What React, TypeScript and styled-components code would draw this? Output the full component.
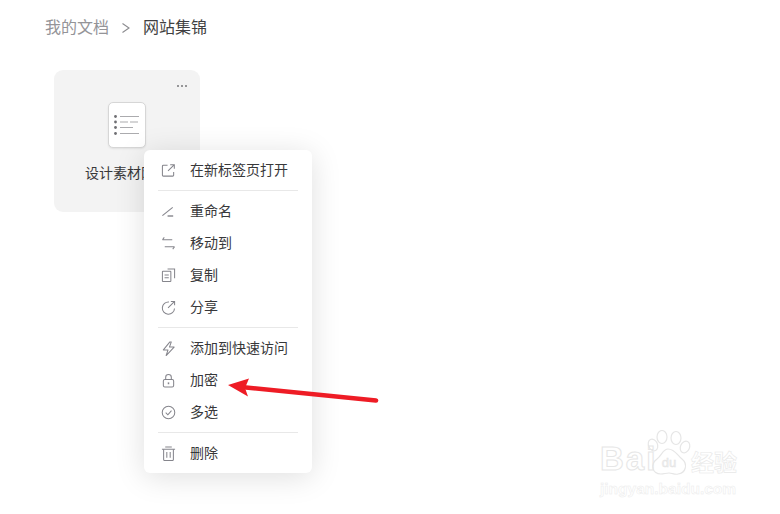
import React from 'react';
import styled, { createGlobalStyle } from 'styled-components';

const GlobalStyle = createGlobalStyle`
  html, body {
    margin: 0;
    background: #fff;
    font-family: "Noto Sans CJK SC", "Noto Sans", sans-serif;
  }
`;

type IconProps = { children: React.ReactNode };

const MenuIcon: React.FC<IconProps> = ({ children }) => (
  <IconSvg viewBox="0 0 16 16" fill="none" stroke="#85858c" strokeWidth="1.1">
    {children}
  </IconSvg>
);

const groups: { label: string; icon: React.ReactNode }[][] = [
  [
    {
      label: '在新标签页打开',
      icon: (
        <>
          <path d="M7 2.500H2.500a1 1 0 0 0-1 1v9.500a1 1 0 0 0 1 1h10a1 1 0 0 0 1-1V9.500" />
          <path d="M7.500 8.500 14 2M9.800 1.800h4.400v4.400" />
        </>
      ),
    },
  ],
  [
    {
      label: '重命名',
      icon: (
        <>
          <path d="M1.500 12.500 12.500 3.500" />
          <path d="M7 12.800h6" strokeWidth="1.500" />
        </>
      ),
    },
    {
      label: '移动到',
      icon: (
        <>
          <path d="M1.500 4h10.500M3.500 1.500l-2 2.500" />
          <path d="M4 11.500h10.500M12.500 14l2-2.500" />
        </>
      ),
    },
    {
      label: '复制',
      icon: (
        <>
          <rect x="1.500" y="3.500" width="9" height="11" rx="0.600" />
          <path d="M3.800 7.500h4.500M3.800 10.500h4.500" />
          <path d="M7 1h7.500v10" />
        </>
      ),
    },
    {
      label: '分享',
      icon: (
        <>
          <path d="M8.500 2.200A6.500 6.500 0 1 0 14.400 9" />
          <path d="M7.500 8.500 14.500 1.500M10.500 1.500h4v4" />
        </>
      ),
    },
  ],
  [
    {
      label: '添加到快速访问',
      icon: <path d="M9.500 1 2.500 9.500h5L5.500 15.500l8.500-9H9L11 1z" strokeLinejoin="round" />,
    },
    {
      label: '加密',
      icon: (
        <>
          <rect x="2.500" y="7" width="11" height="8" rx="1.600" />
          <path d="M5 7V4.500a3 3 0 0 1 6 0V7" />
          <path d="M8 10v2" strokeWidth="1.600" />
        </>
      ),
    },
    {
      label: '多选',
      icon: (
        <>
          <circle cx="8" cy="8" r="6.700" />
          <path d="M5 8.200 7.300 10.400 11.200 6" />
        </>
      ),
    },
  ],
  [
    {
      label: '删除',
      icon: (
        <>
          <path d="M1 3.500h14M4.500 1h7" />
          <path d="M2.800 3.500v11a1 1 0 0 0 1 1h8.400a1 1 0 0 0 1-1v-11" />
          <path d="M6.200 6.500v6M9.800 6.500v6" />
        </>
      ),
    },
  ],
];

const App: React.FC = () => (
  <Page>
    <GlobalStyle />
    <Breadcrumb>
      <Crumb>我的文档</Crumb>
      <Chevron viewBox="0 0 10 12" fill="none" stroke="#8b8b8f" strokeWidth="1.100">
        <path d="M1.500 1.500 8 6l-6.500 4.500" />
      </Chevron>
      <Crumb $current>网站集锦</Crumb>
    </Breadcrumb>

    <Card>
      <MoreDots>
        <i />
        <i />
        <i />
      </MoreDots>
      <DocTile>
        <svg width="26" height="20" viewBox="0 0 26 20" fill="none">
          <g fill="#6f6f73">
            <circle cx="1.500" cy="1.500" r="1.400" />
            <circle cx="1.500" cy="7" r="1.400" />
            <circle cx="1.500" cy="12.500" r="1.400" />
            <circle cx="1.500" cy="18.500" r="1.400" />
          </g>
          <g stroke="#ababae" strokeWidth="1.100">
            <path d="M6 1.500h19M6 18.500h19M6 12.500h13" />
            <path d="M6 7h8M16 7h8" />
          </g>
        </svg>
      </DocTile>
      <CardTitle>设计素材网站</CardTitle>

      <Menu>
        {groups.map((group, i) => (
          <React.Fragment key={group[0].label}>
            {i > 0 && <Divider />}
            {group.map((item) => (
              <MenuRow key={item.label}>
                <MenuIcon>{item.icon}</MenuIcon>
                <MenuLabel>{item.label}</MenuLabel>
              </MenuRow>
            ))}
          </React.Fragment>
        ))}
      </Menu>
    </Card>

    <Arrow viewBox="0 0 160 26" fill="none">
      <path d="M150 22.500 20 9.500" stroke="#ee1c25" strokeWidth="4.600" strokeLinecap="round" />
      <path d="M2 7 23 0.500l-4 9.500 3 8.500z" fill="#ee1c25" />
    </Arrow>

    <Watermark>
      <WatermarkTop>
        <WatermarkBai>Bai</WatermarkBai>
        <Paw viewBox="0 0 44 46" fill="none" stroke="#e6e6e6" strokeWidth="1.200">
          <ellipse cx="15" cy="7" rx="5" ry="6.500" />
          <ellipse cx="29" cy="8" rx="5" ry="6.500" />
          <ellipse cx="6" cy="15" rx="4.500" ry="6" transform="rotate(-25 6 15)" />
          <ellipse cx="38" cy="17" rx="4.500" ry="6" transform="rotate(25 38 17)" />
          <path d="M21 19c-5 0-6 6-11 10-7 5-5 15 4 15 3 0 5-1 8-1s6 2 9 1c8-1 10-10 4-15-5-4-7-10-14-10z" />
          <text x="22" y="37" fontSize="13" fill="#f0f0f0" stroke="#e4e4e4" strokeWidth="0.500" textAnchor="middle" fontFamily="Liberation Sans, sans-serif">
            du
          </text>
        </Paw>
        <WatermarkCjk>经验</WatermarkCjk>
      </WatermarkTop>
      <WatermarkUrl>jingyan.baidu.com</WatermarkUrl>
    </Watermark>
  </Page>
);

export default App;

const Page = styled.div`
  position: relative;
  width: 780px;
  height: 514px;
  overflow: hidden;
  background: #fff;
  padding: 16px 0 0 45px;
  box-sizing: border-box;
`;

const Breadcrumb = styled.nav`
  display: flex;
  align-items: center;
  height: 21px;
`;

const Crumb = styled.span<{ $current?: boolean }>`
  font-size: 16px;
  line-height: 21px;
  color: ${(p) => (p.$current ? '#3f3f41' : '#949498')};
`;

const Chevron = styled.svg`
  width: 10px;
  height: 12px;
  margin: 2px 12px 0 12px;
`;

const Card = styled.section`
  position: relative;
  width: 146px;
  height: 142px;
  margin: 33px 0 0 9px;
  padding-top: 32px;
  box-sizing: border-box;
  display: flex;
  flex-direction: column;
  align-items: center;
  background: #f3f3f3;
  border-radius: 9px;
`;

const MoreDots = styled.div`
  position: absolute;
  top: 15px;
  right: 13px;
  display: flex;
  gap: 2px;

  i {
    width: 2px;
    height: 2px;
    border-radius: 50%;
    background: #77777a;
  }
`;

const DocTile = styled.div`
  width: 38px;
  height: 46px;
  box-sizing: border-box;
  display: flex;
  align-items: center;
  justify-content: center;
  background: #fff;
  border: 1px solid #d6d6d6;
  border-radius: 5px;
  box-shadow: 0 1px 2px rgba(0, 0, 0, 0.08);
`;

const CardTitle = styled.div`
  margin-top: 14px;
  font-size: 14px;
  line-height: 20px;
  color: #38383a;
  white-space: nowrap;
`;

const Menu = styled.div`
  position: absolute;
  top: 80px;
  left: 90px;
  width: 168px;
  padding: 4px 0;
  box-sizing: border-box;
  background: #fff;
  border-radius: 6px;
  box-shadow: 0 4px 30px rgba(0, 0, 0, 0.13);
`;

const MenuRow = styled.div`
  display: flex;
  align-items: center;
  height: 32px;
  padding-left: 17px;
  font-size: 14px;
  color: #38383a;
  white-space: nowrap;
`;

const MenuLabel = styled.span`
  margin-bottom: 2px;
`;

const IconSvg = styled.svg`
  width: 15px;
  height: 15px;
  flex: none;
  margin-right: 14px;
`;

const Divider = styled.hr`
  height: 1px;
  margin: 4px 14px;
  border: 0;
  background: #e8e8e8;
`;

const Arrow = styled.svg`
  position: absolute;
  left: 226px;
  top: 378px;
  width: 160px;
  height: 26px;
`;

const Watermark = styled.div`
  position: absolute;
  left: 600px;
  top: 430px;
  width: 145px;
  color: #fff;
`;

const WatermarkTop = styled.div`
  display: flex;
  align-items: flex-end;
  height: 46px;
  font-family: "Liberation Sans", sans-serif;
  line-height: 34px;
`;

const WatermarkBai = styled.span`
  width: 47px;
  font-size: 33px;
  font-weight: 700;
  letter-spacing: 2px;
  -webkit-text-stroke: 1px #e6e6e6;
`;

const Paw = styled.svg`
  width: 44px;
  height: 46px;
  flex: none;
`;

const WatermarkCjk = styled.span`
  font-family: "Noto Sans CJK SC", sans-serif;
  font-size: 23px;
  font-weight: 700;
  line-height: 30px;
  -webkit-text-stroke: 0.6px #e8e8e8;
`;

const WatermarkUrl = styled.div`
  margin-top: 3px;
  font-family: "Liberation Sans", sans-serif;
  font-size: 15.5px;
  font-weight: 700;
  line-height: 20px;
  -webkit-text-stroke: 0.5px #ebebeb;
`;
